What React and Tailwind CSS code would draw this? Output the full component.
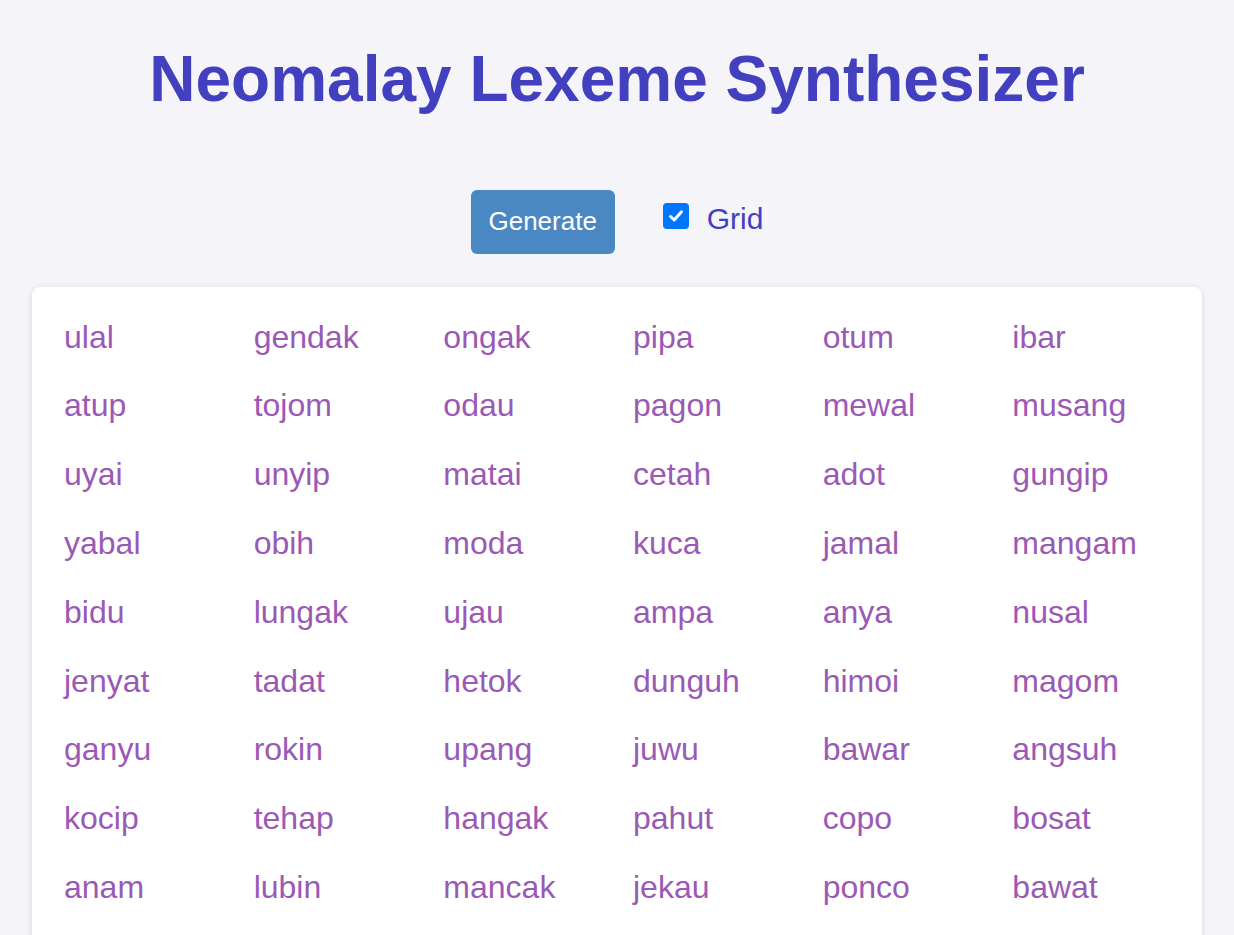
import React, { useState } from "react";

const words = [
  "ulal", "gendak", "ongak", "pipa", "otum", "ibar",
  "atup", "tojom", "odau", "pagon", "mewal", "musang",
  "uyai", "unyip", "matai", "cetah", "adot", "gungip",
  "yabal", "obih", "moda", "kuca", "jamal", "mangam",
  "bidu", "lungak", "ujau", "ampa", "anya", "nusal",
  "jenyat", "tadat", "hetok", "dunguh", "himoi", "magom",
  "ganyu", "rokin", "upang", "juwu", "bawar", "angsuh",
  "kocip", "tehap", "hangak", "pahut", "copo", "bosat",
  "anam", "lubin", "mancak", "jekau", "ponco", "bawat",
];

const App = () => {
  const [grid, setGrid] = useState(true);

  return (
    <div className="min-h-screen bg-[#f4f4f9] pt-[43px] font-['Liberation_Sans',Arial,sans-serif]">
      <h1 className="text-center text-[64px] leading-[1.15] font-bold text-[#4240bf]">
        Neomalay Lexeme Synthesizer
      </h1>

      <div className="mt-[73px] flex items-center justify-center">
        <button className="h-[64px] w-[144px] rounded-[6px] bg-[#4a88c4] text-[26px] leading-[1.15] text-white">
          Generate
        </button>
        <label className="mb-[12px] ml-[48px] flex items-center gap-[18px] text-[30px] leading-[1.15] text-[#4240bf]">
          <span
            onClick={() => setGrid(!grid)}
            className="flex h-[26px] w-[26px] items-center justify-center rounded-[4px] bg-[#0075ff]"
          >
            {grid && (
              <svg width="18" height="18" viewBox="0 0 18 18">
                <path d="M3.5 9.5 L7.2 13 L14.5 4.8" fill="none" stroke="white" strokeWidth="3" strokeLinecap="round" strokeLinejoin="round" />
              </svg>
            )}
          </span>
          <span className="mt-[8px]">Grid</span>
        </label>
      </div>

      <div className="mx-8 mt-[33px] rounded-[8px] bg-white px-8 pt-8 pb-[48px] shadow-[0_1px_6px_rgba(0,0,0,0.12)]">
        <div className="grid grid-cols-6 gap-8">
          {words.map((w, i) => (
            <div key={i} className="text-[32px] leading-[1.15] text-[#9b59b6]">
              {w}
            </div>
          ))}
        </div>
      </div>
    </div>
  );
};

export default App;
